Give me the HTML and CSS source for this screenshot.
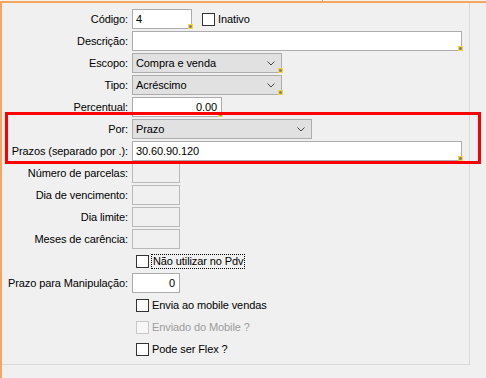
FILE: index.html
```html
<!DOCTYPE html>
<html lang="pt-BR">
<head>
<meta charset="utf-8">
<title>Condição</title>
<link rel="stylesheet" href="styles.css">
</head>
<body>
<div class="topstrip"><span class="tabgap"></span><span class="tabsep"></span></div>
<div class="frame">
  <div class="panel">
    <div class="form">
      <div class="lbl">Código:</div>
      <div class="field">
        <div class="inp w60 req">4</div>
        <div class="chk ml10"><span class="box"></span><span>Inativo</span></div>
      </div>

      <div class="lbl">Descrição:</div>
      <div class="field"><div class="inp w330 req"></div></div>

      <div class="lbl">Escopo:</div>
      <div class="field"><div class="sel w150 req"><span>Compra e venda</span><svg class="chev" width="8" height="5" viewBox="0 0 8 5"><polyline points="0.5,0.5 4,4 7.5,0.5" fill="none" stroke="#444" stroke-width="1"/></svg></div></div>

      <div class="lbl">Tipo:</div>
      <div class="field"><div class="sel w150 req"><span>Acréscimo</span><svg class="chev" width="8" height="5" viewBox="0 0 8 5"><polyline points="0.5,0.5 4,4 7.5,0.5" fill="none" stroke="#444" stroke-width="1"/></svg></div></div>

      <div class="lbl">Percentual:</div>
      <div class="field"><div class="inp w90 num req">0.00</div></div>

      <div class="lbl">Por:</div>
      <div class="field"><div class="sel w180"><span>Prazo</span><svg class="chev" width="8" height="5" viewBox="0 0 8 5"><polyline points="0.5,0.5 4,4 7.5,0.5" fill="none" stroke="#444" stroke-width="1"/></svg></div></div>

      <div class="lbl">Prazos (separado por .):</div>
      <div class="field"><div class="inp w330 req">30.60.90.120</div></div>

      <div class="lbl">Número de parcelas:</div>
      <div class="field"><div class="inp w48 off"></div></div>

      <div class="lbl">Dia de vencimento:</div>
      <div class="field"><div class="inp w48 off"></div></div>

      <div class="lbl">Dia limite:</div>
      <div class="field"><div class="inp w48 off"></div></div>

      <div class="lbl">Meses de carência:</div>
      <div class="field"><div class="inp w48 off"></div></div>

      <div class="lbl"></div>
      <div class="field"><div class="chk ml4"><span class="box"></span><span class="focus">Não utilizar no Pdv</span></div></div>

      <div class="lbl">Prazo para Manipulação:</div>
      <div class="field"><div class="inp w48 num">0</div></div>

      <div class="lbl"></div>
      <div class="field"><div class="chk ml4"><span class="box"></span><span>Envia ao mobile vendas</span></div></div>

      <div class="lbl"></div>
      <div class="field"><div class="chk ml4 disabled"><span class="box"></span><span>Enviado do Mobile ?</span></div></div>

      <div class="lbl"></div>
      <div class="field"><div class="chk ml4"><span class="box"></span><span>Pode ser Flex ?</span></div></div>
    </div>
  </div>
</div>
<div class="highlight"></div>
</body>
</html>
```

FILE: styles.css
```css
* { box-sizing: border-box; }
html, body {
  margin: 0;
  padding: 0;
  background: #f0f0f0;
  width: 486px;
  height: 378px;
  overflow: hidden;
}
body {
  position: relative;
  font-family: "Liberation Sans", Arial, sans-serif;
  font-size: 11px;
  letter-spacing: -0.1px;
  color: #000;
}
.topstrip {
  height: 1px;
  display: flex;
  background: #f4f4f4;
}
.tabgap { width: 322px; }
.tabsep { width: 1px; background: #a8a8a8; }
.frame {
  border-top: 2px solid #f7a55b;
  border-left: 2px solid #f7a55b;
  height: 377px;
}
.panel {
  width: 468px;
  height: 362px;
  border-right: 1px solid #dadada;
  border-bottom: 1px solid #dadada;
  padding-top: 6px;
}
.form {
  display: grid;
  grid-template-columns: 126px 1fr;
  column-gap: 4px;
  row-gap: 2px;
  grid-auto-rows: 20px;
}
.lbl {
  text-align: right;
  line-height: 20px;
  white-space: nowrap;
}
.field {
  display: flex;
  align-items: center;
}
.inp {
  position: relative;
  height: 20px;
  background: #fff;
  border: 1px solid #acacac;
  padding: 0 3px;
  line-height: 18px;
}
.inp.off { background: #f0f0f0; border-color: #b9b9b9; }
.inp.num { text-align: right; padding-right: 4px; }
.sel {
  position: relative;
  height: 20px;
  background: #e1e1e1;
  border: 1px solid #adadad;
  padding: 0 3px;
  display: flex;
  align-items: center;
  justify-content: space-between;
}
.chev { margin-right: 3px; margin-top: 1px; }
.w60 { width: 60px; }
.w330 { width: 330px; }
.w150 { width: 150px; }
.w90 { width: 90px; }
.w180 { width: 180px; }
.w48 { width: 48px; }
.req::after {
  content: "";
  position: absolute;
  right: -2px;
  bottom: -1px;
  width: 5px;
  height: 5px;
  background: radial-gradient(circle, #8b8668 0 1.2px, #f3d54a 1.8px);
}
.chk {
  display: flex;
  align-items: center;
  gap: 3px;
  height: 20px;
}
.ml10 { margin-left: 10px; }
.ml4 { margin-left: 4px; }
.box {
  width: 13px;
  height: 13px;
  border: 1px solid #333;
  background: #fff;
  flex: none;
}
.focus {
  outline: 1px dotted #000;
  outline-offset: 0;
  padding: 0 1px;
  line-height: 13px;
}
.disabled { color: #9c9c9c; }
.disabled .box { border-color: #c8c8c8; background: #f7f7f7; }
.highlight {
  position: absolute;
  left: 5px;
  top: 112px;
  width: 476px;
  height: 52px;
  border: 3px solid #ff0000;
  pointer-events: none;
}
```
